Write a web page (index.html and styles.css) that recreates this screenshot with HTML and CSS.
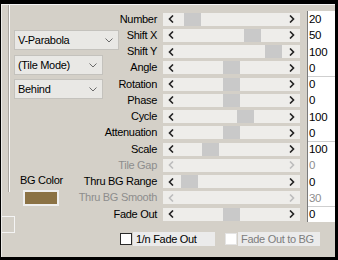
FILE: index.html
```html
<!DOCTYPE html>
<html>
<head>
<meta charset="utf-8">
<link rel="stylesheet" href="styles.css">
</head>
<body>
<div class="win">
  <div class="left">
    <div class="group">
      <div class="combo combo-wide"><span>V-Parabola</span><svg class="chev" width="8" height="5" viewBox="0 0 8 5"><path d="M0.5 0.5 L4 4 L7.5 0.5" fill="none" stroke="#6a6a6a" stroke-width="1"/></svg></div>
      <div class="combo combo-mid"><span>(Tile Mode)</span><svg class="chev" width="8" height="5" viewBox="0 0 8 5"><path d="M0.5 0.5 L4 4 L7.5 0.5" fill="none" stroke="#6a6a6a" stroke-width="1"/></svg></div>
      <div class="combo combo-last"><span>Behind</span><svg class="chev" width="8" height="5" viewBox="0 0 8 5"><path d="M0.5 0.5 L4 4 L7.5 0.5" fill="none" stroke="#6a6a6a" stroke-width="1"/></svg></div>
      <div class="bg-label">BG Color</div>
      <div class="swatch"></div>
    </div>
    <div class="stub"></div>
  </div>
  <div class="right">
    <div class="grid">
      <div class="lbl">Number</div>
      <div class="track"><span class="btn"><svg width="6" height="8" viewBox="0 0 6 8"><path d="M5 0.5 L1.5 4 L5 7.5" class="arr"/></svg></span><span class="area"><span class="thumb" style="margin-left:5px"></span></span><span class="btn"><svg width="6" height="8" viewBox="0 0 6 8"><path d="M1 0.5 L4.5 4 L1 7.5" class="arr"/></svg></span></div>
      <div class="val">20</div>

      <div class="lbl">Shift X</div>
      <div class="track"><span class="btn"><svg width="6" height="8" viewBox="0 0 6 8"><path d="M5 0.5 L1.5 4 L5 7.5" class="arr"/></svg></span><span class="area"><span class="thumb" style="margin-left:65px"></span></span><span class="btn"><svg width="6" height="8" viewBox="0 0 6 8"><path d="M1 0.5 L4.5 4 L1 7.5" class="arr"/></svg></span></div>
      <div class="val">50</div>

      <div class="lbl">Shift Y</div>
      <div class="track"><span class="btn"><svg width="6" height="8" viewBox="0 0 6 8"><path d="M5 0.5 L1.5 4 L5 7.5" class="arr"/></svg></span><span class="area"><span class="thumb" style="margin-left:86px"></span></span><span class="btn"><svg width="6" height="8" viewBox="0 0 6 8"><path d="M1 0.5 L4.5 4 L1 7.5" class="arr"/></svg></span></div>
      <div class="val">100</div>

      <div class="lbl">Angle</div>
      <div class="track"><span class="btn"><svg width="6" height="8" viewBox="0 0 6 8"><path d="M5 0.5 L1.5 4 L5 7.5" class="arr"/></svg></span><span class="area"><span class="thumb" style="margin-left:44px"></span></span><span class="btn"><svg width="6" height="8" viewBox="0 0 6 8"><path d="M1 0.5 L4.5 4 L1 7.5" class="arr"/></svg></span></div>
      <div class="val">0</div>

      <div class="lbl">Rotation</div>
      <div class="track"><span class="btn"><svg width="6" height="8" viewBox="0 0 6 8"><path d="M5 0.5 L1.5 4 L5 7.5" class="arr"/></svg></span><span class="area"><span class="thumb" style="margin-left:44px"></span></span><span class="btn"><svg width="6" height="8" viewBox="0 0 6 8"><path d="M1 0.5 L4.5 4 L1 7.5" class="arr"/></svg></span></div>
      <div class="val val-sep">0</div>

      <div class="lbl">Phase</div>
      <div class="track"><span class="btn"><svg width="6" height="8" viewBox="0 0 6 8"><path d="M5 0.5 L1.5 4 L5 7.5" class="arr"/></svg></span><span class="area"><span class="thumb" style="margin-left:44px"></span></span><span class="btn"><svg width="6" height="8" viewBox="0 0 6 8"><path d="M1 0.5 L4.5 4 L1 7.5" class="arr"/></svg></span></div>
      <div class="val">0</div>

      <div class="lbl">Cycle</div>
      <div class="track"><span class="btn"><svg width="6" height="8" viewBox="0 0 6 8"><path d="M5 0.5 L1.5 4 L5 7.5" class="arr"/></svg></span><span class="area"><span class="thumb" style="margin-left:58px"></span></span><span class="btn"><svg width="6" height="8" viewBox="0 0 6 8"><path d="M1 0.5 L4.5 4 L1 7.5" class="arr"/></svg></span></div>
      <div class="val">100</div>

      <div class="lbl">Attenuation</div>
      <div class="track"><span class="btn"><svg width="6" height="8" viewBox="0 0 6 8"><path d="M5 0.5 L1.5 4 L5 7.5" class="arr"/></svg></span><span class="area"><span class="thumb" style="margin-left:44px"></span></span><span class="btn"><svg width="6" height="8" viewBox="0 0 6 8"><path d="M1 0.5 L4.5 4 L1 7.5" class="arr"/></svg></span></div>
      <div class="val">0</div>

      <div class="lbl">Scale</div>
      <div class="track"><span class="btn"><svg width="6" height="8" viewBox="0 0 6 8"><path d="M5 0.5 L1.5 4 L5 7.5" class="arr"/></svg></span><span class="area"><span class="thumb" style="margin-left:23px"></span></span><span class="btn"><svg width="6" height="8" viewBox="0 0 6 8"><path d="M1 0.5 L4.5 4 L1 7.5" class="arr"/></svg></span></div>
      <div class="val val-sep">100</div>

      <div class="lbl off">Tile Gap</div>
      <div class="track track-off"><span class="btn"><svg width="6" height="8" viewBox="0 0 6 8"><path d="M5 0.5 L1.5 4 L5 7.5" class="arr"/></svg></span><span class="area"></span><span class="btn"><svg width="6" height="8" viewBox="0 0 6 8"><path d="M1 0.5 L4.5 4 L1 7.5" class="arr"/></svg></span></div>
      <div class="val off">0</div>

      <div class="lbl">Thru BG Range</div>
      <div class="track"><span class="btn"><svg width="6" height="8" viewBox="0 0 6 8"><path d="M5 0.5 L1.5 4 L5 7.5" class="arr"/></svg></span><span class="area"><span class="thumb" style="margin-left:2px"></span></span><span class="btn"><svg width="6" height="8" viewBox="0 0 6 8"><path d="M1 0.5 L4.5 4 L1 7.5" class="arr"/></svg></span></div>
      <div class="val">0</div>

      <div class="lbl off">Thru BG Smooth</div>
      <div class="track track-off"><span class="btn"><svg width="6" height="8" viewBox="0 0 6 8"><path d="M5 0.5 L1.5 4 L5 7.5" class="arr"/></svg></span><span class="area"></span><span class="btn"><svg width="6" height="8" viewBox="0 0 6 8"><path d="M1 0.5 L4.5 4 L1 7.5" class="arr"/></svg></span></div>
      <div class="val off">30</div>

      <div class="lbl">Fade Out</div>
      <div class="track"><span class="btn"><svg width="6" height="8" viewBox="0 0 6 8"><path d="M5 0.5 L1.5 4 L5 7.5" class="arr"/></svg></span><span class="area"><span class="thumb" style="margin-left:44px"></span></span><span class="btn"><svg width="6" height="8" viewBox="0 0 6 8"><path d="M1 0.5 L4.5 4 L1 7.5" class="arr"/></svg></span></div>
      <div class="val val-sep">0</div>
    </div>
    <div class="checks">
      <span class="box"></span><span class="clabel">1/n Fade Out</span>
      <span class="box box-off"></span><span class="clabel clabel-off">Fade Out to BG</span>
    </div>
  </div>
</div>
</body>
</html>
```
FILE: styles.css
```css
html, body {
  margin: 0;
  padding: 0;
}
body {
  background: #000;
  width: 338px;
  height: 260px;
  overflow: hidden;
  font-family: "Liberation Sans", Arial, sans-serif;
  font-size: 11px;
  letter-spacing: -0.3px;
  color: #000;
}
.win {
  margin: 4px 0 0 1px;
  width: 333px;
  height: 252px;
  border-top: 1px solid #f4f4f4;
  border-left: 1px solid #ecebe8;
  background: #d4d0c8;
  display: flex;
}
.left {
  width: 74px;
  flex: none;
}
.group {
  margin-left: 7px;
  height: 187px;
  box-sizing: border-box;
  border-left: 1px solid #fbfbfb;
  box-shadow: -1px 0 0 #aaa6a0;
  padding: 25px 0 0 4px;
}
.combo {
  display: flex;
  align-items: center;
  justify-content: space-between;
  height: 20px;
  box-sizing: border-box;
  border: 1px solid #c4c2bd;
  background: #e9e8e5;
  padding: 0 5px 0 3px;
  white-space: nowrap;
}
.combo-wide { width: 105px; }
.combo-mid { width: 89px; margin-top: 5px; }
.combo-last { width: 89px; margin-top: 4px; }
.chev { flex: none; }
.bg-label {
  margin: 75px 0 0 6px;
  line-height: 13px;
  white-space: nowrap;
}
.swatch {
  margin: 3px 0 0 9px;
  width: 36px;
  height: 16px;
  box-sizing: border-box;
  background: #8b7245;
  border: 2px solid #efefef;
}
.stub {
  margin-top: 24px;
  width: 13px;
  height: 17px;
  box-sizing: border-box;
  border: 1px solid #f4f4f4;
  border-left: none;
}
.right {
  flex: 1;
}
.grid {
  margin-top: 6px;
  display: grid;
  grid-template-columns: 87px 144px 28px;
  grid-auto-rows: 16.25px;
}
.lbl {
  padding-right: 6px;
  text-align: right;
  align-self: center;
  line-height: 13px;
  white-space: nowrap;
}
.track {
  display: flex;
  width: 137px;
  height: 13px;
  align-self: center;
  background: #eeedea;
}
.btn {
  width: 16px;
  flex: none;
  display: flex;
  align-items: center;
  justify-content: center;
}
.arr {
  fill: none;
  stroke: #222;
  stroke-width: 1.6;
}
.track-off .arr {
  stroke: #bdbdbd;
}
.area {
  flex: 1;
  display: flex;
}
.thumb {
  width: 17px;
  background: #c9c9c9;
}
.val {
  background: #fff;
  border-left: 1px solid #7b7b7b;
  padding-left: 1px;
  line-height: 16px;
  font-size: 11.5px;
}
.val-sep {
  box-shadow: inset 0 1px 0 #cfcfcf;
}
.off {
  color: #8d8d8d;
}
.checks {
  display: flex;
  align-items: center;
  margin: 10px 0 0 44px;
}
.box {
  width: 12px;
  height: 12px;
  box-sizing: border-box;
  border: 1px solid #2a2a2a;
  background: #fff;
}
.box-off {
  margin-left: 10px;
  border-color: #e4e4e4;
}
.clabel {
  margin-left: 1px;
  width: 82px;
  height: 14px;
  box-sizing: border-box;
  padding-left: 3px;
  line-height: 14px;
  background: #ebebeb;
  white-space: nowrap;
}
.clabel-off {
  color: #7d7d7d;
}
```
